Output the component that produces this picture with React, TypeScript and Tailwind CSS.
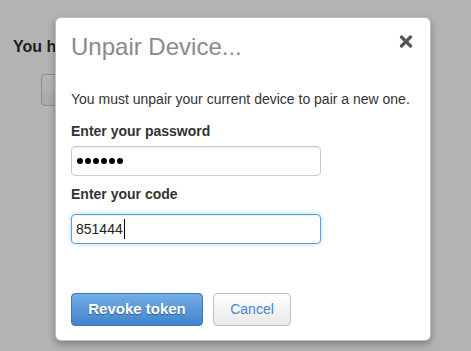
const CloseIcon = () => (
  <svg width="14" height="13" viewBox="0 0 14 13" className="block">
    <path d="M2.5 2 L11.5 11 M11.5 2 L2.5 11" stroke="#555" strokeWidth="3.2" strokeLinecap="round" />
  </svg>
);

const PasswordDots = ({ count }: { count: number }) => (
  <div className="flex items-center gap-[2px]">
    {Array.from({ length: count }).map((_, i) => (
      <span key={i} className="block w-[6px] h-[6px] rounded-full bg-black" />
    ))}
  </div>
);

export default function App() {
  return (
    <div className="relative w-[471px] h-[351px] overflow-hidden bg-[#b3b3b3] font-['Liberation_Sans',Arial,sans-serif]">
      {/* page behind the backdrop, mostly hidden by the modal */}
      <div className="pt-[37px] pl-[13px]">
        <h3 className="w-[50px] overflow-hidden text-[16px] leading-[20px] font-bold text-[#1e1e1e] whitespace-nowrap">
          You have a paired device
        </h3>
        <div className="mt-[17px] ml-[28px] w-[120px] h-[32px] rounded-[4px] border border-[#8c8c8c] bg-gradient-to-b from-[#b6b6b6] to-[#a9a9a9]" />
      </div>

      {/* modal */}
      <div className="absolute left-[55px] top-[17px] w-[376px] h-[324px] box-border bg-white border border-[rgba(0,0,0,0.25)] rounded-[6px] shadow-[0_3px_7px_rgba(0,0,0,0.3)] pl-[15px] pt-[14px]">
        <button className="absolute top-[17px] right-[17px]">
          <CloseIcon />
        </button>

        <h2 className="text-[24px] leading-[30px] text-[#8a8a8a]">Unpair Device...</h2>

        <p className="mt-[27px] text-[14px] leading-[20px] text-[#333]">
          You must unpair your current device to pair a new one.
        </p>

        <label className="block mt-[12px] text-[14px] leading-[20px] font-bold text-[#333]">
          Enter your password
        </label>
        <div className="mt-[5px] w-[250px] h-[30px] box-border border border-[#cccccc] rounded-[4px] pl-[5px] flex items-center shadow-[inset_0_1px_1px_rgba(0,0,0,0.075)]">
          <PasswordDots count={6} />
        </div>

        <label className="block mt-[8px] text-[14px] leading-[20px] font-bold text-[#333]">
          Enter your code
        </label>
        <div className="mt-[10px] w-[250px] h-[30px] box-border border border-[#5d9fd8] rounded-[4px] pl-[4px] flex items-center text-[14px] leading-[20px] text-[#222] shadow-[inset_0_1px_1px_rgba(0,0,0,0.075),0_0_4px_rgba(82,168,236,0.5)]">
          <span>851444</span>
          <span className="block w-px h-[20px] bg-black ml-[1px]" />
        </div>

        <div className="mt-[49px] flex gap-[10px]">
          <button className="w-[132px] h-[33px] box-border rounded-[4px] border border-[#3a77bd] bg-gradient-to-b from-[#74ade3] to-[#3f84cd] text-white text-[15px] font-bold [text-shadow:0_1px_1px_rgba(0,0,0,0.4)]">
            Revoke token
          </button>
          <button className="w-[78px] h-[33px] box-border rounded-[4px] border border-[#bdbdbd] bg-gradient-to-b from-white to-[#e8e8e8] text-[#3d88d3] text-[14px]">
            Cancel
          </button>
        </div>
      </div>
    </div>
  );
}
